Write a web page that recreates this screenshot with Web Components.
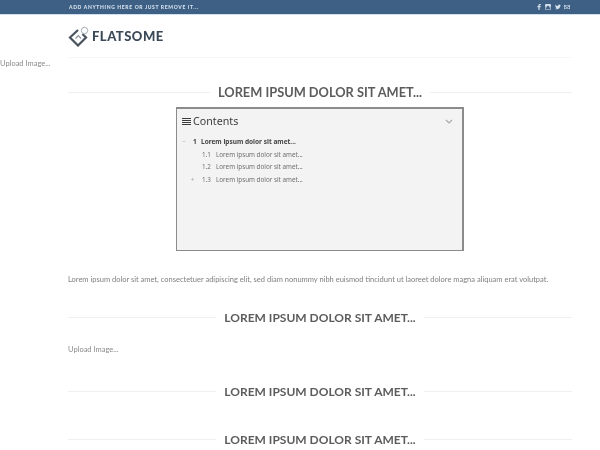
<!DOCTYPE html>
<html>
<head>
<meta charset="utf-8">
<style>
    html, body { margin: 0; padding: 0; background: #fff; overflow: hidden; height: 450px; }
    body { font-family: Lato, "Liberation Sans", sans-serif; color: #777; filter: blur(0.5px); }
</style>
</head>
<body>
<top-bar>ADD ANYTHING HERE OR JUST REMOVE IT...</top-bar>
<site-header></site-header>
<upload-note flush></upload-note>
<section-title size="12.800" top="15">LOREM IPSUM DOLOR SIT AMET...</section-title>
<toc-box>
    <toc-item level="1" num="1" marker="−">Lorem ipsum dolor sit amet...</toc-item>
    <toc-item level="2" num="1.1">Lorem ipsum dolor sit amet...</toc-item>
    <toc-item level="2" num="1.2">Lorem ipsum dolor sit amet...</toc-item>
    <toc-item level="2" num="1.3" marker="+">Lorem ipsum dolor sit amet...</toc-item>
</toc-box>
<body-text>Lorem ipsum dolor sit amet, consectetuer adipiscing elit, sed diam nonummy nibh euismod tincidunt ut laoreet dolore magna aliquam erat volutpat.</body-text>
<section-title size="12" top="22">LOREM IPSUM DOLOR SIT AMET...</section-title>
<upload-note></upload-note>
<section-title size="12" top="27">LOREM IPSUM DOLOR SIT AMET...</section-title>
<section-title size="12" top="32">LOREM IPSUM DOLOR SIT AMET...</section-title>

<script>
class TopBar extends HTMLElement {
    constructor() {
        super();
        this.attachShadow({ mode: 'open' });
        this.shadowRoot.innerHTML = `
            <style>
                :host {
                    display: flex;
                    justify-content: space-between;
                    align-items: center;
                    height: 14px;
                    padding: 0 30px 0 69px;
                    background: #3f6085;
                    border-bottom: 1px solid #cfe0ef;
                    color: #d5e0ec;
                    font-size: 5px;
                    font-weight: 900;
                    letter-spacing: 0.65px;
                    white-space: nowrap;
                }
                .icons { display: flex; gap: 3.500px; align-items: center; }
                svg { width: 6px; height: 6px; display: block; fill: #d5e0ec; }
            </style>
            <span><slot></slot></span>
            <div class="icons">
                <svg viewBox="0 0 10 10"><path d="M6 10V5.500h1.500L8 3.500H6V2.500c0-.6.2-1 1-1h1V0H6.500C4.800 0 4 1 4 2.400v1.100H2.500v2H4V10z"/></svg>
                <svg viewBox="0 0 10 10"><path fill-rule="evenodd" d="M2 0h6a2 2 0 0 1 2 2v6a2 2 0 0 1-2 2H2a2 2 0 0 1-2-2V2a2 2 0 0 1 2-2zm3 3a2 2 0 1 0 0 4 2 2 0 0 0 0-4zM1 4v4a1 1 0 0 0 1 1h6a1 1 0 0 0 1-1V4H8a3 3 0 1 1-6 0z"/></svg>
                <svg viewBox="0 0 10 10"><path d="M10 2c-.4.2-.8.300-1.200.300.4-.3.800-.7.900-1.200-.4.200-.8.400-1.300.500A2 2 0 0 0 5 3.500C3.300 3.400 1.800 2.600.700 1.300c-.5.900-.3 2.100.6 2.700-.3 0-.6-.1-.9-.3 0 1 .7 1.800 1.600 2-.3.100-.6.100-.9 0 .3.800 1 1.400 1.900 1.400A4 4 0 0 1 0 8c3.700 2.300 9-.1 9-5.300.4-.2.700-.4 1-.7z"/></svg>
                <svg viewBox="0 0 10 10"><path fill-rule="evenodd" d="M0 1.500h10v7H0zM1 2.500 5 5.500l4-3zM1 3.700v3.800h8V3.700L5 6.700z"/></svg>
            </div>
        `;
    }
}

class SiteHeader extends HTMLElement {
    constructor() {
        super();
        this.attachShadow({ mode: 'open' });
        this.shadowRoot.innerHTML = `
            <style>
                :host {
                    display: flex;
                    align-items: center;
                    gap: 3px;
                    height: 42px;
                    margin: 0 29px 0 68px;
                    border-bottom: 1px solid #f6f6f6;
                }
                svg { width: 21px; height: 22px; display: block; margin-top: -1px; }
                .name {
                    font-size: 13px;
                    font-weight: 900;
                    letter-spacing: 0.5px;
                    color: #3c4a58;
                }
            </style>
            <svg viewBox="0 0 21 22" fill="none">
                <path d="M10 5 2 12.500 10 20.500l8-8L14.500 9" stroke="#48535e" stroke-width="2.200"/>
                <path d="M7.500 13.500l2.800-2.800 2.800 2.800" stroke="#8b949c" stroke-width="1.200"/>
                <circle cx="16.500" cy="5.500" r="3.200" stroke="#a3abb2" stroke-width="1"/>
            </svg>
            <span class="name">FLATSOME</span>
        `;
    }
}

class UploadNote extends HTMLElement {
    constructor() {
        super();
        this.attachShadow({ mode: 'open' });
        this.shadowRoot.innerHTML = `
            <style>
                :host {
                    display: block;
                    margin: 19px 0 0 68px;
                    height: 12px;
                    line-height: 12px;
                    font-size: 7.500px;
                    color: #8a8a8a;
                }
                :host([flush]) { margin: 0; padding-top: 1px; height: 10px; line-height: 10px; }
            </style>
            Upload Image...
        `;
    }
}

class SectionTitle extends HTMLElement {
    constructor() {
        super();
        this.attachShadow({ mode: 'open' });
        this.shadowRoot.innerHTML = `
            <style>
                :host {
                    display: flex;
                    align-items: center;
                    gap: 8px;
                    margin: 0 28px 0 68px;
                    height: 16px;
                    white-space: nowrap;
                    color: #5c5c5c;
                    font-weight: 700;
                }
                .line { flex: 1; height: 1px; background: #efefef; }
            </style>
            <div class="line"></div>
            <span><slot></slot></span>
            <div class="line"></div>
        `;
    }

    connectedCallback() {
        this.style.fontSize = `${this.getAttribute('size')}px`;
        this.style.marginTop = `${this.getAttribute('top')}px`;
    }
}

class TocBox extends HTMLElement {
    constructor() {
        super();
        this.attachShadow({ mode: 'open' });
        this.shadowRoot.innerHTML = `
            <style>
                :host {
                    display: block;
                    box-sizing: border-box;
                    width: 288px;
                    height: 144px;
                    margin: 7px 0 0 176px;
                    padding: 5px 9px 0 5px;
                    background: #f3f3f3;
                    border: 1px solid #8b8b8b;
                    border-width: 2px 2px 1px 1px;
                }
                .head {
                    display: flex;
                    align-items: center;
                    height: 14px;
                    margin-bottom: 7px;
                    color: #3d3d3d;
                    font-family: "Noto Sans", Lato, sans-serif;
                    font-size: 10.700px;
                }
                .bars { width: 9px; height: 7px; margin-right: 2px; display: block; }
                .title { flex: 1; }
                .chev { width: 8px; height: 5px; display: block; }
            </style>
            <div class="head">
                <svg class="bars" viewBox="0 0 9 7"><path d="M0 .5h9M0 2.500h9M0 4.500h9M0 6.500h9" stroke="#3d3d3d" stroke-width="1.100"/></svg>
                <span class="title">Contents</span>
                <svg class="chev" viewBox="0 0 8 5" fill="none"><path d="M1 1l3 3 3-3" stroke="#aaa" stroke-width="1.200"/></svg>
            </div>
            <slot></slot>
        `;
    }
}

class TocItem extends HTMLElement {
    constructor() {
        super();
        this.attachShadow({ mode: 'open' });
        this.shadowRoot.innerHTML = `
            <style>
                :host {
                    display: flex;
                    align-items: center;
                    height: 12.700px;
                    font-family: "Noto Sans", Lato, sans-serif;
                    font-size: 6.300px;
                    color: #6f6f6f;
                    white-space: nowrap;
                }
                :host([level="1"]) { font-weight: 700; font-size: 6.500px; color: #444; }
                .marker { color: #aaa; font-weight: 400; text-align: center; flex: none; }
                .num { flex: none; }
                :host([level="1"]) .marker { width: 4px; margin-right: 7px; }
                :host([level="1"]) .num { width: 8px; }
                :host([level="2"]) .marker { width: 9px; margin: 0 5px 0 6px; }
                :host([level="2"]) .num { width: 14px; }
            </style>
            <span class="marker"></span>
            <span class="num"></span>
            <span><slot></slot></span>
        `;
    }

    connectedCallback() {
        this.shadowRoot.querySelector('.marker').textContent = this.getAttribute('marker') || '';
        this.shadowRoot.querySelector('.num').textContent = this.getAttribute('num');
    }
}

class BodyText extends HTMLElement {
    constructor() {
        super();
        this.attachShadow({ mode: 'open' });
        this.shadowRoot.innerHTML = `
            <style>
                :host {
                    display: block;
                    margin: 22px 29px 0 68px;
                    height: 14px;
                    line-height: 14px;
                    font-size: 7.500px;
                    color: #808080;
                    white-space: nowrap;
                }
            </style>
            <slot></slot>
        `;
    }
}

customElements.define('top-bar', TopBar);
customElements.define('site-header', SiteHeader);
customElements.define('upload-note', UploadNote);
customElements.define('section-title', SectionTitle);
customElements.define('toc-box', TocBox);
customElements.define('toc-item', TocItem);
customElements.define('body-text', BodyText);
</script>
</body>
</html>
